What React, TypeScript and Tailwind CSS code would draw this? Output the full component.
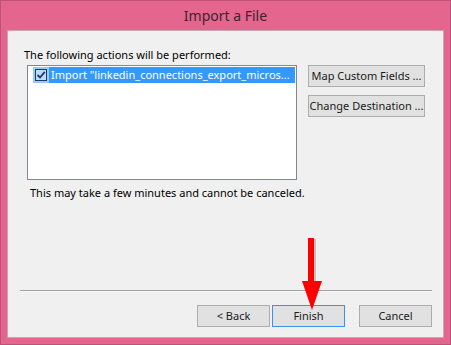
const FONT = { fontFamily: '"Noto Sans", "Open Sans", sans-serif' };

function Btn({ label, focused, className }: { label: string; focused?: boolean; className?: string }) {
  return (
    <div
      className={
        'flex items-center justify-center whitespace-nowrap bg-[#e1e1e1] text-[11px] text-[#1a1a1a] border ' +
        (focused ? 'border-[#3c90e8] ' : 'border-[#adadad] ') +
        (className ?? '')
      }
    >
      {label}
    </div>
  );
}

function RedArrow() {
  return (
    <svg className="absolute left-[298px] top-[236px]" width="26" height="74" viewBox="0 0 26 74">
      <rect x="11" y="2" width="6" height="44" fill="#9a9a9a" opacity="0.5" />
      <rect x="9" y="1" width="6" height="45" fill="#ff0000" />
      <polygon points="3,44 23,44 13,73" fill="#ff0000" />
    </svg>
  );
}

export default function App() {
  return (
    <div className="relative w-[451px] h-[345px] bg-[#e4658d] border border-[#c2517a] flex flex-col" style={FONT}>
      {/* Title */}
      <div className="h-[29px] flex items-center justify-center text-[14px] text-[#3a2630]">
        Import a File
      </div>

      {/* Body */}
      <div className="flex-1 mx-[6px] mb-[6px] bg-[#f0f0f0] border border-[#c9a6b4] flex flex-col pl-[16px] pr-[10px]">
        <div className="mt-[16px] text-[11px] text-black leading-[15px]">The following actions will be performed:</div>

        <div className="flex mt-[3px] ml-[3px]">
          <div className="w-[270px] h-[115px] bg-white border border-[#828790] p-[1px] pl-[5px]">
            <div className="flex h-[16px] w-[262px]">
              <div className="w-[16px] h-[16px] bg-[#99c9f7] flex items-center justify-center">
                <div className="w-[12px] h-[12px] border border-[#1e3b6b] bg-[#bcdcfa] flex items-center justify-center">
                  <svg width="10" height="10" viewBox="0 0 10 10">
                    <path d="M1.5 5 L4 7.5 L8.8 1.8" stroke="#1e3b6b" strokeWidth="1.8" fill="none" />
                  </svg>
                </div>
              </div>
              <div className="flex-1 bg-[#3399ff] text-white text-[11px] leading-[16px] pl-[2px] whitespace-nowrap overflow-hidden">
                Import "linkedin_connections_export_micros...
              </div>
            </div>
          </div>
          <div className="flex flex-col gap-[8px] ml-[11px]">
            <Btn label="Map Custom Fields ..." className="w-[117px] h-[22px]" />
            <Btn label="Change Destination ..." className="w-[117px] h-[22px]" />
          </div>
        </div>

        <div className="mt-[5px] ml-[6px] text-[11px] text-black leading-[16px]">
          This may take a few minutes and cannot be canceled.
        </div>

        <div className="flex-1" />
        <div className="h-[2px] bg-[#a0a0a0] ml-[-4px] mr-[1px] border-b border-[#f8f8f8]" />

        <div className="flex justify-end gap-[2px] mt-[13px] mb-[10px] mr-[1px]">
          <Btn label="< Back" className="w-[73px] h-[22px]" />
          <Btn label="Finish" focused className="w-[73px] h-[22px] mr-[12px]" />
          <Btn label="Cancel" className="w-[73px] h-[22px]" />
        </div>
      </div>

      <RedArrow />
    </div>
  );
}
